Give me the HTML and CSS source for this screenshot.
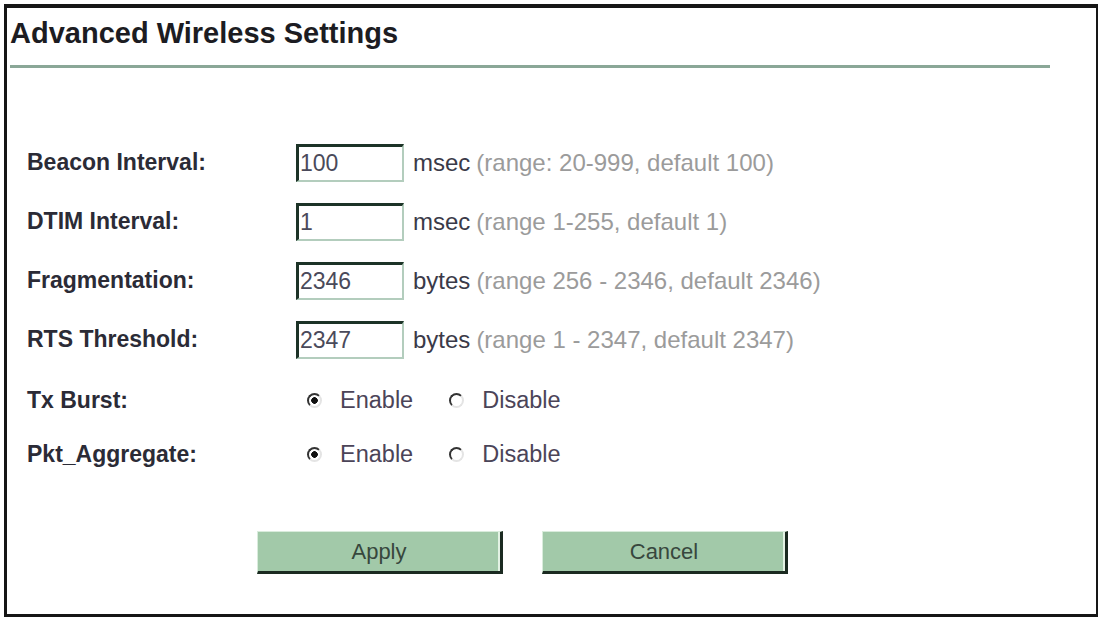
FILE: index.html
```html
<!DOCTYPE html>
<html lang="en">
<head>
  <meta charset="UTF-8">
  <meta name="viewport" content="width=device-width, initial-scale=1.0">
  <title>Advanced Wireless Settings</title>
  <link rel="stylesheet" href="styles.css">
</head>
<body>
  <div class="frame">
    <h1 class="page-title">Advanced Wireless Settings</h1>
    <div class="title-rule"></div>

    <form class="settings">
      <div class="row">
        <label class="field-label" for="beacon">Beacon Interval:</label>
        <input class="field-input" id="beacon" type="text" value="100">
        <span class="unit">msec</span>
        <span class="hint">(range: 20-999, default 100)</span>
      </div>
      <div class="row">
        <label class="field-label" for="dtim">DTIM Interval:</label>
        <input class="field-input" id="dtim" type="text" value="1">
        <span class="unit">msec</span>
        <span class="hint">(range 1-255, default 1)</span>
      </div>
      <div class="row">
        <label class="field-label" for="frag">Fragmentation:</label>
        <input class="field-input" id="frag" type="text" value="2346">
        <span class="unit">bytes</span>
        <span class="hint">(range 256 - 2346, default 2346)</span>
      </div>
      <div class="row">
        <label class="field-label" for="rts">RTS Threshold:</label>
        <input class="field-input" id="rts" type="text" value="2347">
        <span class="unit">bytes</span>
        <span class="hint">(range 1 - 2347, default 2347)</span>
      </div>

      <div class="row radio-row first-radio">
        <span class="field-label">Tx Burst:</span>
        <label class="option"><input type="radio" name="txburst" checked> Enable</label>
        <label class="option"><input type="radio" name="txburst"> Disable</label>
      </div>
      <div class="row radio-row">
        <span class="field-label">Pkt_Aggregate:</span>
        <label class="option"><input type="radio" name="pktagg" checked> Enable</label>
        <label class="option"><input type="radio" name="pktagg"> Disable</label>
      </div>

      <div class="actions">
        <button type="button" class="btn">Apply</button>
        <button type="button" class="btn">Cancel</button>
      </div>
    </form>
  </div>
</body>
</html>
```

FILE: styles.css
```css
/* page frame */
body {
  margin: 0;
  background: #fff;
  font-family: "Liberation Sans", Arial, sans-serif;
}

.frame {
  box-sizing: border-box;
  height: 613px;
  margin: 4px 0 1px 4px;
  border-style: solid;
  border-color: #161616;
  border-width: 4px 2px 3px 3px;
}

.page-title {
  margin: 9px 0 0 3px;
  font-size: 29px;
  line-height: 32px;
  font-weight: bold;
  color: #1c1c22;
}

.title-rule {
  height: 3px;
  margin: 16px 46px 0 3px;
  background: #8aa797;
}

/* form rows */
.settings {
  margin: 65px 0 0 0;
  padding-left: 20px;
}

.row {
  display: flex;
  align-items: center;
  height: 59px;
  font-size: 23px;
}

.field-label {
  width: 269px;
  flex-shrink: 0;
  font-weight: bold;
  color: #2b2b36;
}

.field-input {
  box-sizing: border-box;
  width: 108px;
  height: 38px;
  margin: 0;
  padding: 0 0 0 1px;
  border-style: solid;
  border-width: 3px 2px 2px 3px;
  border-color: #1d3327 #b3cdbd #b3cdbd #1d3327;
  font-family: inherit;
  font-size: 23px;
  color: #4a4a5a;
  outline: none;
}

.unit {
  margin-left: 9px;
  font-size: 24px;
  color: #3a3a48;
}

.hint {
  margin-left: 6px;
  font-size: 24px;
  color: #9b9b9b;
}

/* radios */
.radio-row {
  height: 54px;
}

.first-radio {
  margin-top: 4px;
}

.option {
  display: inline-flex;
  align-items: center;
  font-size: 23.5px;
  color: #4b4458;
}

.option + .option {
  margin-left: 36px;
}

.field-label + .option {
  margin-left: 11px;
}

.option input {
  appearance: none;
  -webkit-appearance: none;
  box-sizing: border-box;
  width: 15px;
  height: 15px;
  margin: 0 18px 0 0;
  border-radius: 50%;
  border: 2px solid;
  border-color: #333 #e4e4e4 #e4e4e4 #333;
  background: #fff;
}

.option input:checked {
  background: radial-gradient(circle, #111 0 3px, #fff 3.6px);
}

/* buttons */
.actions {
  display: flex;
  gap: 39px;
  margin-top: 50px;
  padding-left: 230px;
}

.btn {
  box-sizing: border-box;
  width: 246px;
  height: 43px;
  border-style: solid;
  border-width: 1px 3px 3px 1px;
  border-color: #d9ecdc #1b2a21 #1b2a21 #d9ecdc;
  background: #a2c9a9;
  box-shadow: inset -2px 0 0 #e3f2e4;
  font-family: inherit;
  font-size: 22px;
  color: #37473d;
  padding: 0;
}
```
